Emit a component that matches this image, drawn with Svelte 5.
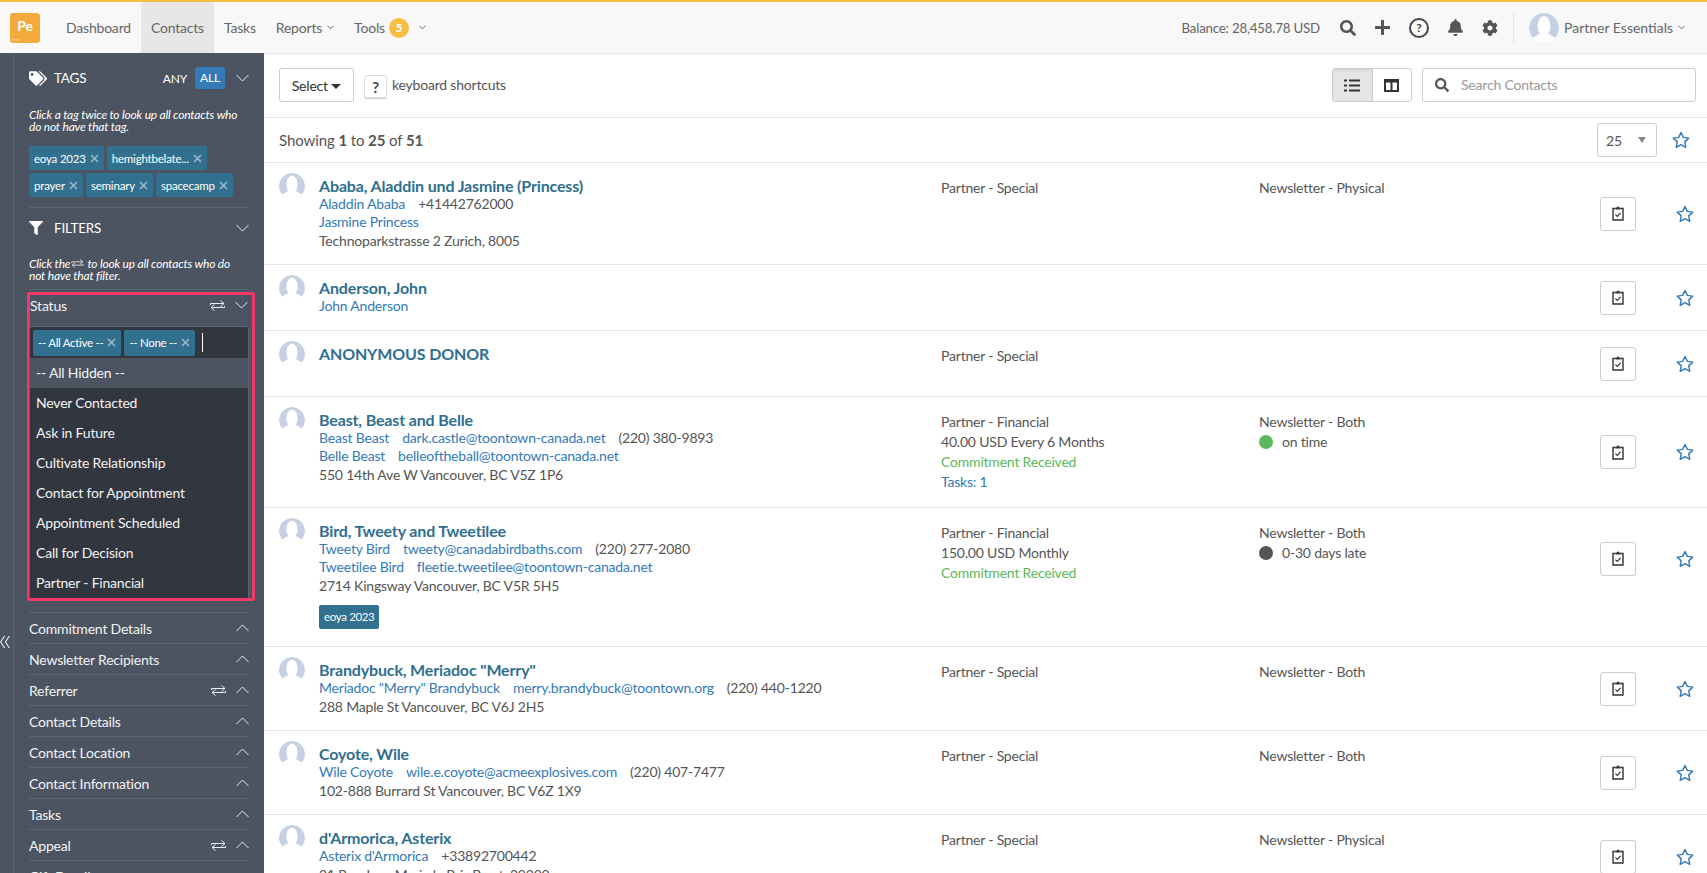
<script>
	const contacts = [
		{
			name: 'Ababa, Aladdin und Jasmine (Princess)',
			people: [
				[{ link: 'Aladdin Ababa' }, { text: '+41442762000' }],
				[{ link: 'Jasmine Princess' }]
			],
			address: 'Technoparkstrasse 2 Zurich, 8005',
			status: 'Partner - Special',
			news: 'Newsletter - Physical'
		},
		{
			name: 'Anderson, John',
			people: [[{ link: 'John Anderson' }]],
			status: '',
			news: ''
		},
		{ name: 'ANONYMOUS DONOR', people: [], status: 'Partner - Special', news: '' },
		{
			name: 'Beast, Beast and Belle',
			people: [
				[{ link: 'Beast Beast' }, { link: 'dark.castle@toontown-canada.net' }, { text: '(220) 380-9893' }],
				[{ link: 'Belle Beast' }, { link: 'belleoftheball@toontown-canada.net' }]
			],
			address: '550 14th Ave W Vancouver, BC V5Z 1P6',
			status: 'Partner - Financial',
			amount: '40.00 USD Every 6 Months',
			received: true,
			tasks: 'Tasks: 1',
			news: 'Newsletter - Both',
			dot: 'green',
			late: 'on time'
		},
		{
			name: 'Bird, Tweety and Tweetilee',
			people: [
				[{ link: 'Tweety Bird' }, { link: 'tweety@canadabirdbaths.com' }, { text: '(220) 277-2080' }],
				[{ link: 'Tweetilee Bird' }, { link: 'fleetie.tweetilee@toontown-canada.net' }]
			],
			address: '2714 Kingsway Vancouver, BC V5R 5H5',
			status: 'Partner - Financial',
			amount: '150.00 USD Monthly',
			received: true,
			news: 'Newsletter - Both',
			dot: 'grey',
			late: '0-30 days late',
			tag: 'eoya 2023'
		},
		{
			name: 'Brandybuck, Meriadoc "Merry"',
			people: [
				[{ link: 'Meriadoc "Merry" Brandybuck' }, { link: 'merry.brandybuck@toontown.org' }, { text: '(220) 440-1220' }]
			],
			address: '288 Maple St Vancouver, BC V6J 2H5',
			status: 'Partner - Special',
			news: 'Newsletter - Both'
		},
		{
			name: 'Coyote, Wile',
			people: [
				[{ link: 'Wile Coyote' }, { link: 'wile.e.coyote@acmeexplosives.com' }, { text: '(220) 407-7477' }]
			],
			address: '102-888 Burrard St Vancouver, BC V6Z 1X9',
			status: 'Partner - Special',
			news: 'Newsletter - Both'
		},
		{
			name: "d'Armorica, Asterix",
			people: [[{ link: "Asterix d'Armorica" }, { text: '+33892700442' }]],
			address: '21 Rue Jean Marie le Bris Brest, 29200',
			status: 'Partner - Special',
			news: 'Newsletter - Physical'
		}
	];

	const options = [
		'Never Contacted',
		'Ask in Future',
		'Cultivate Relationship',
		'Contact for Appointment',
		'Appointment Scheduled',
		'Call for Decision',
		'Partner - Financial'
	];

	const filters = [
		{ label: 'Commitment Details' },
		{ label: 'Newsletter Recipients' },
		{ label: 'Referrer', swap: true },
		{ label: 'Contact Details' },
		{ label: 'Contact Location' },
		{ label: 'Contact Information' },
		{ label: 'Tasks' },
		{ label: 'Appeal', swap: true },
		{ label: 'Gift Details' }
	];

	const searchPath =
		'M505 442.7L405.3 343c-4.5-4.5-10.6-7-17-7H372c27.6-35.3 44-79.7 44-128C416 93.1 322.9 0 208 0S0 93.1 0 208s93.1 208 208 208c48.3 0 92.7-16.4 128-44v16.3c0 6.4 2.5 12.5 7 17l99.7 99.7c9.4 9.4 24.6 9.4 33.9 0l28.3-28.3c9.4-9.4 9.4-24.6.1-34zM208 336c-70.7 0-128-57.2-128-128 0-70.7 57.2-128 128-128 70.7 0 128 57.2 128 128 0 70.7-57.2 128-128 128z';
</script>

{#snippet chevron(up, size = 13)}
	<svg class="chev" width={size} height="8" viewBox="0 0 13 8">
		<polyline points={up ? '0.5,7 6.5,1 12.5,7' : '0.5,1 6.5,7 12.5,1'} fill="none" stroke="currentColor" stroke-width="1" />
	</svg>
{/snippet}

{#snippet smallChev()}
	<svg class="small-chev" width="7" height="5" viewBox="0 0 7 5">
		<polyline points="0.5,0.8 3.5,3.8 6.5,0.8" fill="none" stroke="currentColor" stroke-width="1" />
	</svg>
{/snippet}

{#snippet swap(w = 15, h = 11)}
	<svg class="swap" width={w} height={h} viewBox="0 0 15 11">
		<path d="M0.5 5V3.5H14M10.5 0.5l3.5 3l-3.5 3M14.5 6V7.5H1M4.5 4.5L1 7.5l3.5 3" fill="none" stroke="currentColor" stroke-width="1" />
	</svg>
{/snippet}

{#snippet cross()}
	<svg class="cross" width="9" height="9" viewBox="0 0 9 9">
		<path d="M1 1l7 7M8 1l-7 7" stroke="#9fb9c8" stroke-width="1.5" />
	</svg>
{/snippet}

{#snippet avatar(w, h, fill)}
	<svg class="avatar" width={w} height={h} viewBox="0 0 30 30">
		<circle cx="15" cy="15" r="15" fill={fill} />
		<ellipse cx="15" cy="13" rx="6.5" ry="10" fill="#fff" />
		<path d="M0 30V26Q6 24 10 21H20Q24 24 30 26V30z" fill="#fff" />
	</svg>
{/snippet}

{#snippet star(size)}
	<svg class="star" width={size} height={size} viewBox="0 0 20 20">
		<path d="M10 1.6l2.6 5.5 6 .8-4.4 4.2 1.1 6L10 15.2l-5.3 2.9 1.1-6L1.4 7.9l6-.8z" fill="none" stroke="#337ab7" stroke-width="1.6" stroke-linejoin="round" />
	</svg>
{/snippet}

<div class="page">
	<header class="nav">
		<div class="logo"><b>Pe</b><small>Partner</small></div>
		<nav class="menu">
			<span>Dashboard</span>
			<span class="active">Contacts</span>
			<span>Tasks</span>
			<span>Reports {@render smallChev()}</span>
			<span>Tools <i class="badge">5</i> {@render smallChev()}</span>
		</nav>
		<div class="nav-right">
			<span class="balance">Balance: 28,458.78 USD</span>
			<svg class="ni" width="16" height="16" viewBox="0 0 512 512"><path d={searchPath} fill="#555" /></svg>
			<svg class="ni" width="15" height="15" viewBox="0 0 15 15"><path d="M7.5 1v13M1 7.5h13" stroke="#555" stroke-width="3" stroke-linecap="round" /></svg>
			<span class="help">?</span>
			<svg class="ni" width="15" height="17" viewBox="0 0 448 512"><path fill="#555" d="M224 512c35.32 0 63.97-28.65 63.97-64H160.03c0 35.35 28.65 64 63.97 64zm215.39-149.71c-19.32-20.76-55.47-51.99-55.47-154.29 0-77.7-54.48-139.9-127.94-155.16V32c0-17.67-14.32-32-31.98-32s-31.98 14.33-31.98 32v20.84C118.56 68.1 64.08 130.3 64.08 208c0 102.3-36.15 133.53-55.47 154.29-6 6.45-8.66 14.16-8.61 21.71.11 16.4 12.98 32 32.1 32h383.8c19.12 0 32-15.6 32.1-32 .05-7.55-2.61-15.27-8.61-21.71z" /></svg>
			<svg class="ni" width="16" height="16" viewBox="0 0 512 512"><path fill="#555" d="M487.4 315.7l-42.6-24.6c4.3-23.2 4.3-47 0-70.2l42.6-24.6c4.9-2.8 7.1-8.6 5.5-14-11.1-35.6-30-67.8-54.7-94.6-3.8-4.1-10-5.1-14.8-2.3L380.8 110c-17.9-15.4-38.5-27.3-60.8-35.1V25.8c0-5.6-3.9-10.5-9.4-11.7-36.7-8.2-74.3-7.8-109.2 0-5.5 1.2-9.4 6.1-9.4 11.7V75c-22.2 7.9-42.8 19.8-60.8 35.1L88.7 85.5c-4.9-2.8-11-1.9-14.8 2.3-24.7 26.7-43.6 58.9-54.7 94.6-1.7 5.4.6 11.2 5.5 14L67.3 221c-4.3 23.2-4.3 47 0 70.2l-42.6 24.6c-4.9 2.8-7.1 8.6-5.5 14 11.1 35.6 30 67.8 54.7 94.6 3.8 4.1 10 5.1 14.8 2.3l42.6-24.6c17.9 15.4 38.5 27.3 60.8 35.1v49.2c0 5.6 3.9 10.5 9.4 11.7 36.7 8.2 74.3 7.8 109.2 0 5.5-1.2 9.4-6.1 9.4-11.7v-49.2c22.2-7.9 42.8-19.8 60.8-35.1l42.6 24.6c4.9 2.8 11 1.9 14.8-2.3 24.7-26.7 43.6-58.9 54.7-94.6 1.5-5.5-.7-11.3-5.6-14.1zM256 336c-44.1 0-80-35.9-80-80s35.9-80 80-80 80 35.9 80 80-35.9 80-80 80z" /></svg>
			<span class="sep"></span>
			{@render avatar(30, 30, '#c5d0e3')}
			<span class="user">Partner Essentials</span>
			{@render smallChev()}
		</div>
	</header>

	<div class="body">
		<aside class="sidebar">
			<div class="strip">
				<svg width="10" height="14" viewBox="0 0 10 14">
					<path d="M4.6 1L0.6 7l4 6M9.4 1L5.4 7l4 6" fill="none" stroke="#f1f3f5" stroke-width="1.1" />
				</svg>
			</div>
			<div class="side-inner">
				<div class="side-head">
					<svg width="18" height="15" viewBox="0 0 640 512"><path fill="#fff" d="M497.941 225.941L286.059 14.059A48 48 0 0 0 252.118 0H48C21.49 0 0 21.49 0 48v204.118a48 48 0 0 0 14.059 33.941l211.882 211.882c18.744 18.745 49.136 18.746 67.882 0l204.118-204.118c18.745-18.745 18.745-49.137 0-67.882zM112 160c-26.51 0-48-21.49-48-48s21.49-48 48-48 48 21.49 48 48-21.49 48-48 48zm513.941 133.823L421.823 497.941c-18.745 18.745-49.137 18.745-67.882 0l-.36-.36L527.64 323.522c16.999-16.999 26.36-39.6 26.36-63.64s-9.362-46.641-26.36-63.64L331.397 0h48.721a48 48 0 0 1 33.941 14.059l211.882 211.882c18.745 18.745 18.745 49.137 0 67.882z" /></svg>
					<span class="head-label">TAGS</span>
					<span class="any">ANY</span>
					<span class="all">ALL</span>
					{@render chevron(false)}
				</div>
				<p class="hint tag-hint">Click a tag twice to look up all contacts who do not have that tag.</p>
				<div class="chips">
					{#each ['eoya 2023', 'hemightbelate...', 'prayer', 'seminary', 'spacecamp'] as tag}
						<span class="chip">{tag} {@render cross()}</span>
					{/each}
				</div>
				<div class="rule first-rule"></div>
				<div class="side-head filters-head">
					<svg class="funnel" width="14" height="16" viewBox="0 0 512 512"><path fill="#fff" d="M487.976 0H24.028C2.71 0-8.047 25.866 7.058 40.971L192 225.941V432c0 7.831 3.821 15.17 10.237 19.662l80 55.98C298.02 518.69 320 507.493 320 487.98V225.941l184.947-184.97C520.021 25.896 509.338 0 487.976 0z" /></svg>
					<span class="head-label">FILTERS</span>
					<span class="spacer"></span>
					{@render chevron(false)}
				</div>
				<p class="hint filter-hint">Click the<span class="hint-icon">{@render swap(13, 9)}</span>to look up all contacts who do<br />not have that filter.</p>
				<div class="rule second-rule"></div>

				<section class="status">
					<div class="status-head">
						<span>Status</span>
						<span class="spacer"></span>
						{@render swap()}
						{@render chevron(false)}
					</div>
					<div class="select">
						<div class="select-input">
							<span class="chip">-- All Active -- {@render cross()}</span>
							<span class="chip">-- None -- {@render cross()}</span>
							<span class="cursor"></span>
						</div>
						<div class="option hover">-- All Hidden --</div>
						{#each options as option}
							<div class="option">{option}</div>
						{/each}
					</div>
				</section>

				<div class="filters">
					{#each filters as filter}
						<div class="filter">
							<span>{filter.label}</span>
							<span class="spacer"></span>
							{#if filter.swap}{@render swap()}{/if}
							{@render chevron(true)}
						</div>
					{/each}
				</div>
			</div>
		</aside>

		<main class="main">
			<div class="toolbar">
				<button class="btn select-btn">Select <i class="caret"></i></button>
				<kbd>?</kbd>
				<span class="shortcuts">keyboard shortcuts</span>
				<span class="spacer"></span>
				<div class="toggle">
					<span class="on">
						<svg width="16" height="13" viewBox="0 0 16 13"><path d="M0 1.5h3M5 1.5h11M0 6.5h3M5 6.5h11M0 11.5h3M5 11.5h11" stroke="#333" stroke-width="2" /></svg>
					</span>
					<span>
						<svg width="15" height="13" viewBox="0 0 15 13"><path d="M1 1h13v11H1zM7.5 3v9M1 2.5h13" fill="none" stroke="#333" stroke-width="2" /></svg>
					</span>
				</div>
				<div class="search">
					<svg width="14" height="14" viewBox="0 0 512 512"><path d={searchPath} fill="#555" /></svg>
					<span>Search Contacts</span>
				</div>
			</div>

			<div class="showing">
				<span>Showing <b>1</b> to <b>25</b> of <b>51</b></span>
				<span class="spacer"></span>
				<div class="per-page">25 <i class="mini-caret"></i></div>
				{@render star(18)}
			</div>

			{#each contacts as c}
				<article class="row">
					<div class="row-top">
						<div class="pic">{@render avatar(26, 26, '#c5d0e3')}</div>
						<div class="info">
							<a class="name" href="#top">{c.name}</a>
							{#each c.people as line}
								<div class="person">
									{#each line as part}
										{#if part.link}<a href="#top">{part.link}</a>{:else}<span>{part.text}</span>{/if}
									{/each}
								</div>
							{/each}
							{#if c.address}<div class="address">{c.address}</div>{/if}
						</div>
						<div class="col">
							<div>{c.status}</div>
							{#if c.amount}<div>{c.amount}</div>{/if}
							{#if c.received}<div class="green">Commitment Received</div>{/if}
							{#if c.tasks}<a href="#top">{c.tasks}</a>{/if}
						</div>
						<div class="col">
							<div>{c.news}</div>
							{#if c.late}
								<div class="late"><i class="dot {c.dot}"></i>{c.late}</div>
							{/if}
						</div>
						<button class="btn clip" aria-label="Log task">
							<svg width="12" height="15" viewBox="0 0 12 15">
								<path d="M3.5 2.5H1v11.5h10V2.5H8.5" fill="none" stroke="#333" stroke-width="1.4" />
								<path d="M3.5 1.5h1.5a1 1 0 0 1 2 0h1.5v2h-5z" fill="#333" />
								<path d="M3.4 8.6l1.9 1.9 3.3-3.6" fill="none" stroke="#333" stroke-width="1.2" />
							</svg>
						</button>
						<div class="row-star">{@render star(18)}</div>
					</div>
					{#if c.tag}<div class="row-tag"><span>{c.tag}</span></div>{/if}
				</article>
			{/each}
		</main>
	</div>
</div>

<style>
	:global(body) {
		margin: 0;
		background: #fff;
	}

	.page {
		height: 873px;
		overflow: hidden;
		font-family: Lato, 'Noto Sans', sans-serif;
		font-size: 14px;
		letter-spacing: -0.2px;
		color: #555;
		border-top: 2px solid #f5bd41;
		box-sizing: border-box;
	}

	.spacer {
		flex: 1;
	}

	.nav {
		height: 51px;
		display: flex;
		align-items: center;
		padding-left: 10px;
		background: #f8f8f8;
		box-sizing: border-box;
	}

	.logo {
		width: 30px;
		height: 30px;
		background: #f4aa3b;
		border-radius: 3px;
		color: #fff;
		text-align: center;
		position: relative;
		font-size: 14px;
		line-height: 26px;
	}

	.logo small {
		position: absolute;
		left: 2px;
		bottom: 1px;
		font-size: 3px;
		line-height: 4px;
		font-weight: 400;
		opacity: 0.6;
	}

	.menu {
		display: flex;
		height: 100%;
		margin-left: 16px;
		font-size: 14px;
		color: #666;
	}

	.menu span {
		display: flex;
		align-items: center;
		padding: 0 10px;
		white-space: nowrap;
	}

	.menu .active {
		background: #e7e7e7;
	}

	.badge {
		width: 20px;
		height: 20px;
		margin: 0 5px 0 4px;
		border-radius: 50%;
		background: #f5bd41;
		color: #fff;
		font-style: normal;
		font-size: 12px;
		font-weight: 700;
		text-align: center;
		line-height: 20px;
	}

	.small-chev {
		margin-left: 5px;
		color: #666;
	}

	.nav-right {
		margin-left: auto;
		display: flex;
		align-items: center;
		height: 100%;
		padding-right: 22px;
		color: #666;
	}

	.balance {
		font-size: 13.3px;
	}

	.ni {
		margin-left: 19px;
	}

	.balance + .ni {
		margin-left: 20px;
	}

	.help {
		width: 16px;
		height: 16px;
		margin-left: 19px;
		border: 2px solid #444;
		border-radius: 50%;
		font-size: 12px;
		font-weight: 700;
		text-align: center;
		line-height: 16px;
		color: #444;
	}

	.sep {
		width: 1px;
		height: 30px;
		background: #e4e4e4;
		margin: 0 15px;
	}

	.user {
		margin-left: 5px;
		letter-spacing: 0;
	}

	.body {
		display: flex;
		height: 820px;
		box-shadow: inset 0 1px 0 #e7e7e7;
	}

	.sidebar {
		width: 264px;
		flex: none;
		display: flex;
		background: #4b5460;
		color: #f1f3f5;
		overflow: hidden;
	}

	.strip {
		width: 13px;
		flex: none;
		border-right: 1px solid #5b6673;
		padding-top: 582px;
	}

	.strip svg {
		display: block;
	}

	.side-inner {
		width: 220px;
		margin-left: 15px;
	}

	.side-head {
		margin-top: 14px;
		height: 22px;
		display: flex;
		align-items: center;
		gap: 7px;
		color: #fff;
	}

	.head-label {
		flex: 1;
		font-size: 13.5px;
	}

	.funnel {
		margin-right: 4px;
	}

	.filters-head .head-label {
		flex: none;
	}

	.any {
		font-size: 12px;
		margin-right: 1px;
	}

	.all {
		width: 30px;
		height: 22px;
		background: #337ab7;
		border-radius: 3px;
		font-size: 12px;
		text-align: center;
		line-height: 22px;
		margin-right: 4px;
	}

	.chev {
		color: #e8ebef;
	}

	.hint {
		margin: 0;
		font-size: 12px;
		line-height: 12px;
		font-style: italic;
		color: #fff;
		white-space: nowrap;
	}

	.tag-hint {
		white-space: normal;
		margin-top: 20px;
	}

	.hint-icon {
		display: inline-block;
		margin: 0 3px 0 1px;
	}

	.hint-icon .swap {
		display: block;
	}

	.chips {
		display: flex;
		flex-wrap: wrap;
		gap: 3px;
		margin-top: 13px;
	}

	.chip {
		display: inline-flex;
		align-items: center;
		gap: 4px;
		height: 24px;
		padding: 0 5px;
		background: #32708f;
		border-radius: 2px;
		color: #fff;
		font-size: 11.5px;
		white-space: nowrap;
	}

	.rule {
		height: 1px;
		background: #5b6673;
	}

	.first-rule {
		margin-top: 10px;
	}

	.filters-head {
		margin-top: 9px;
	}

	.filter-hint {
		margin-top: 19px;
	}

	.second-rule {
		margin-top: 7px;
	}

	.status {
		margin: 2px -6px 0 -2px;
		padding: 0 4px 0 0;
		border: 3px solid #f0386b;
		border-radius: 2px;
	}

	.status-head {
		height: 32px;
		box-sizing: border-box;
		padding-bottom: 12px;
		display: flex;
		align-items: center;
		gap: 10px;
	}

	.swap {
		color: #e8ebef;
		vertical-align: middle;
		flex: none;
	}

	.select {
		background: #31363f;
		border-radius: 2px 2px 0 0;
		box-shadow: 0 0 0 1px #5b6673;
		clip-path: inset(-1px -1px 0 -1px);
	}

	.select-input {
		height: 31px;
		display: flex;
		align-items: center;
		gap: 3px;
		padding: 0 3px;
	}

	.select-input .chip {
		height: 26px;
		letter-spacing: -0.3px;
	}

	.cursor {
		width: 1.5px;
		height: 19px;
		background: #fff;
		margin-left: 4px;
	}

	.option {
		height: 30px;
		line-height: 30px;
		padding-left: 6px;
		color: #f1f3f5;
	}

	.option.hover {
		background: #4b5460;
	}

	.filters {
		margin-top: 11px;
	}

	.filter {
		height: 31px;
		box-sizing: border-box;
		border-top: 1px solid #5b6673;
		display: flex;
		align-items: center;
		gap: 10px;
	}

	.main {
		flex: 1;
		min-width: 0;
	}

	.toolbar {
		height: 65px;
		box-sizing: border-box;
		padding: 15px 11px 0 15px;
		border-bottom: 1px solid #e4e6e8;
		display: flex;
		align-items: flex-start;
	}

	.btn {
		background: #fff;
		border: 1px solid #ccc;
		border-radius: 3px;
		font: inherit;
		letter-spacing: inherit;
		color: #333;
		padding: 0;
		box-sizing: border-box;
	}

	.select-btn {
		width: 75px;
		height: 34px;
	}

	.caret {
		display: inline-block;
		border: 5px solid transparent;
		border-top-color: #333;
		border-bottom: 0;
		vertical-align: middle;
	}

	kbd {
		width: 23px;
		height: 23px;
		margin: 7px 0 0 10px;
		box-sizing: border-box;
		border: 1px solid #ddd;
		border-radius: 3px;
		box-shadow: 0 1px 1px #ccc;
		font-family: inherit;
		font-weight: 700;
		font-size: 15px;
		line-height: 22px;
		text-align: center;
		color: #444;
	}

	.shortcuts {
		margin: 7px 0 0 5px;
		line-height: 20px;
		color: #555;
	}

	.toggle {
		display: flex;
		width: 80px;
		height: 34px;
		box-sizing: border-box;
		border: 1px solid #ccc;
		border-radius: 3px;
		overflow: hidden;
		margin-right: 10px;
	}

	.toggle span {
		flex: 1;
		display: flex;
		align-items: center;
		justify-content: center;
	}

	.toggle .on {
		background: #e6e6e6;
		border-right: 1px solid #ccc;
		box-shadow: inset 0 2px 3px rgba(0, 0, 0, 0.08);
	}

	.search {
		width: 274px;
		height: 34px;
		box-sizing: border-box;
		border: 1px solid #ccc;
		border-radius: 3px;
		display: flex;
		align-items: center;
		padding: 0 0 1px 12px;
		gap: 12px;
		color: #999;
	}

	.showing {
		height: 45px;
		box-sizing: border-box;
		padding: 5px 17px 5px 15px;
		border-bottom: 1px solid #e4e6e8;
		display: flex;
		align-items: center;
		font-size: 15px;
		letter-spacing: -0.1px;
	}

	.showing b {
		font-weight: 700;
	}

	.per-page {
		width: 60px;
		height: 34px;
		box-sizing: border-box;
		border: 1px solid #ccc;
		border-radius: 3px;
		display: flex;
		align-items: center;
		justify-content: space-between;
		padding: 0 10px 0 8px;
		margin-right: 15px;
		font-size: 14px;
	}

	.mini-caret {
		border: 4px solid transparent;
		border-top: 6px solid #888;
		border-bottom: 0;
	}

	.row {
		border-bottom: 1px solid #e4e6e8;
		padding: 0 14px 0 15px;
	}

	.row-top {
		display: grid;
		grid-template-columns: 40px 622px 318px 1fr 36px 57px;
		min-height: 65px;
		padding: 14px 0;
		box-sizing: border-box;
	}

	.pic {
		margin-top: -4px;
		height: 24px;
		overflow: hidden;
	}

	.avatar {
		display: block;
		flex: none;
		border-radius: 50%;
	}

	.info {
		line-height: 18px;
	}

	.name {
		display: block;
		font-size: 16px;
		font-weight: 700;
		letter-spacing: -0.15px;
		color: #2f6f8f;
		text-decoration: none;
	}

	.person {
		display: flex;
		gap: 13px;
	}

	a {
		color: #337ab7;
		text-decoration: none;
	}

	.address {
		margin-top: 1px;
		color: #555;
	}

	.col {
		line-height: 20px;
		margin: 1px 0;
	}

	.green {
		color: #5cb85c;
	}

	.late {
		display: flex;
		align-items: center;
		gap: 9px;
	}

	.dot {
		width: 14px;
		height: 14px;
		border-radius: 50%;
	}

	.dot.green {
		background: #5cb85c;
	}

	.dot.grey {
		background: #555;
	}

	.clip {
		width: 36px;
		height: 34px;
		align-self: center;
		display: flex;
		align-items: center;
		justify-content: center;
	}

	.row-star {
		align-self: center;
		padding-left: 40px;
		height: 18px;
	}

	.star {
		display: block;
		flex: none;
	}

	.row-tag {
		padding: 0 0 17px 40px;
		margin-top: -4px;
	}

	.row-tag span {
		display: inline-block;
		height: 24px;
		line-height: 24px;
		padding: 0 5px;
		background: #32708f;
		border-radius: 2px;
		color: #fff;
		font-size: 11.5px;
		letter-spacing: -0.35px;
	}
</style>
